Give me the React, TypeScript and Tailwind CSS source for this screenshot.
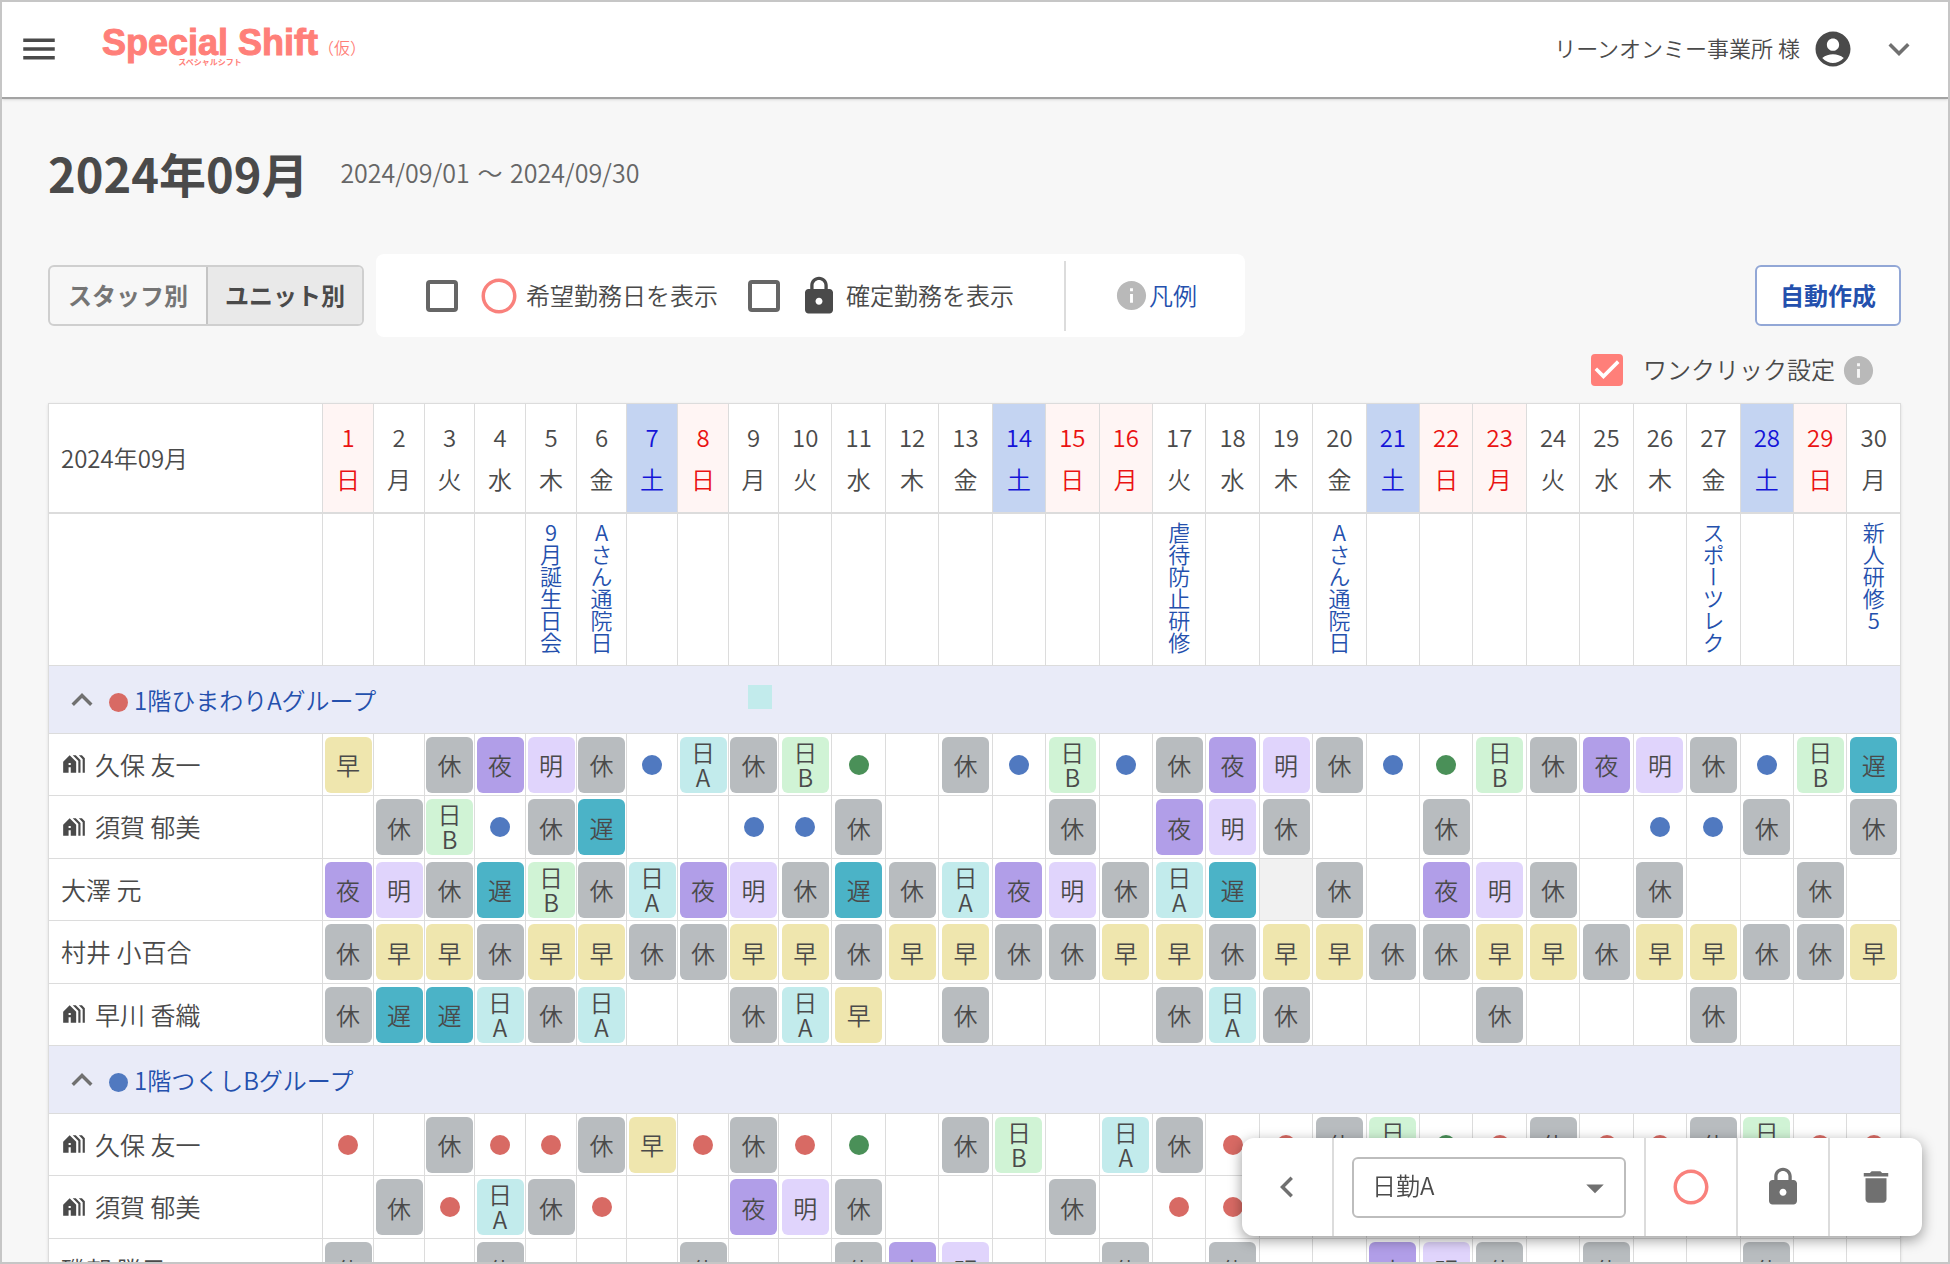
import { useState } from "react";
import {
  MdAccountCircle,
  MdArrowDropDown,
  MdChevronLeft,
  MdDelete,
  MdExpandLess,
  MdExpandMore,
  MdHolidayVillage,
  MdInfo,
  MdLock,
  MdMenu,
  MdRadioButtonUnchecked,
} from "react-icons/md";

interface Staff {
  name: string;
  shared?: boolean;
  // one character per day, "." is an empty day and "_" a closed one
  shifts: string;
}

interface Unit {
  name: string;
  dot: string;
  marker?: boolean;
  staff: Staff[];
}

const WEEKDAYS = ["日", "月", "火", "水", "木", "金", "土"];
const HOLIDAYS = [16, 23];
const DAYS = Array.from({ length: 30 }, (_, i) => i + 1);

const EVENTS: Record<number, string> = {
  5: "9月誕生日会",
  6: "Aさん通院日",
  17: "虐待防止研修",
  20: "Aさん通院日",
  27: "スポーツレク",
  30: "新人研修5",
};

const CHIPS: Record<string, string> = {
  早: "bg-[#efe6ae]",
  休: "bg-[#b8bcbf]",
  夜: "bg-[#b19ee8]",
  明: "bg-[#e0d4fc]",
  遅: "bg-[#4bb3c7]",
  A: "bg-[#c2ebec]",
  B: "bg-[#d0f3d5]",
};

const DOTS: Record<string, string> = {
  r: "bg-[#d86a64]",
  b: "bg-[#5079c0]",
  g: "bg-[#4a9058]",
};

const UNITS: Unit[] = [
  {
    name: "1階ひまわりAグループ",
    dot: "r",
    marker: true,
    staff: [
      { name: "久保 友一", shared: true, shifts: "早.休夜明休bA休Bg.休bBb休夜明休bgB休夜明休bB遅" },
      { name: "須賀 郁美", shared: true, shifts: ".休Bb休遅..bb休...休.夜明休..休...bb休.休" },
      { name: "大澤 元", shifts: "夜明休遅B休A夜明休遅休A夜明休A遅_休.夜明休.休..休." },
      { name: "村井 小百合", shifts: "休早早休早早休休早早休早早休休早早休早早休休早早休早早休休早" },
      { name: "早川 香織", shared: true, shifts: "休遅遅A休A..休A早.休...休A休...休...休..." },
    ],
  },
  {
    name: "1階つくしBグループ",
    dot: "b",
    staff: [
      { name: "久保 友一", shared: true, shifts: "r.休rr休早r休rg.休B.A休rr休Bgr休rr休Brr" },
      { name: "須賀 郁美", shared: true, shifts: ".休rA休r..夜明休...休.rr............" },
      { name: "磯部 勝己", shifts: "休..休...休..休夜明..休.休..夜明休.休..休.." },
    ],
  },
];

function dayStyle(day: number) {
  const weekday = (day - 1) % 7;
  if (weekday === 0 || HOLIDAYS.includes(day)) return "bg-[#fff5f4] text-[#ea1212]";
  if (weekday === 6) return "bg-[#c4d4f2] text-[#1414d8]";
  return "";
}

// one digit days are narrower, the rest share what is left
function dayWidth(day: number) {
  if (day > 9) return "";
  return day % 3 === 0 ? "w-[50px]" : "w-[51px]";
}

function CheckBox({ id, defaultChecked }: { id: string; defaultChecked?: boolean }) {
  return (
    <span className="relative flex h-8 w-8 shrink-0">
      <input
        id={id}
        type="checkbox"
        defaultChecked={defaultChecked}
        className="peer h-8 w-8 appearance-none rounded-[4px] border-4 border-[#666] checked:border-[#ff7f79] checked:bg-[#ff7f79]"
      />
      <svg
        viewBox="3 3 18 18"
        className="pointer-events-none absolute inset-0 hidden h-8 w-8 fill-white peer-checked:block"
      >
        <path d="M10 17l-5-5 1.41-1.41L10 14.17l7.59-7.59L19 8z" />
      </svg>
    </span>
  );
}

function ShiftCell({ code }: { code: string }) {
  if (code in DOTS) {
    return <span className={`mx-auto block h-5 w-5 rounded-full ${DOTS[code]}`} />;
  }
  if (code in CHIPS) {
    const isDay = code === "A" || code === "B";
    return (
      <span
        className={`mx-auto flex h-14 w-[47px] flex-col items-center justify-center rounded-md leading-[25px] ${CHIPS[code]} ${isDay ? "pb-0.5" : ""}`}
      >
        {isDay && <span>日</span>}
        <span>{code}</span>
      </span>
    );
  }
  return null;
}

function UnitRows({ unit }: { unit: Unit }) {
  const [open, setOpen] = useState(true);

  return (
    <tbody>
      <tr className="h-[68px] bg-[#e9ebf8]">
        <th colSpan={31} className="relative border-r border-b border-[#dcdcdc] p-0 font-[350]">
          <div className="flex items-center pl-3">
            <button
              type="button"
              aria-label={unit.name}
              onClick={() => setOpen(!open)}
              className="text-[42px] text-[#707070]"
            >
              {open ? <MdExpandLess /> : <MdExpandMore />}
            </button>
            <span className={`mt-1.5 ml-1.5 h-[19px] w-[19px] rounded-full ${DOTS[unit.dot]}`} />
            <a href="#unit" className="ml-1.5 text-[#2450ad]">
              {unit.name}
            </a>
          </div>
          {unit.marker && <span className="absolute top-[19px] left-[699px] h-6 w-6 bg-[#c2ebec]" />}
        </th>
      </tr>
      {open &&
        unit.staff.map((s) => (
          <tr key={s.name} className="h-[62px] odd:h-[63px]">
            <th className="border-r border-b border-[#dcdcdc] p-0 pl-3 text-left text-[25px] font-[350]">
              <span className="flex items-center gap-2">
                {s.shared && <MdHolidayVillage className="text-[26px]" />}
                {s.name}
              </span>
            </th>
            {DAYS.map((day) => {
              const code = s.shifts[day - 1];
              return (
                <td
                  key={day}
                  className={`border-r border-b border-[#dcdcdc] p-0 ${code === "_" ? "bg-[#f1f1f1]" : ""}`}
                >
                  <ShiftCell code={code} />
                </td>
              );
            })}
          </tr>
        ))}
    </tbody>
  );
}

function ShiftTable() {
  return (
    <table className="w-full table-fixed border-separate border-spacing-0 border-t border-l border-[#dcdcdc] bg-white text-center shadow-sm">
      <colgroup>
        <col className="w-[274px]" />
        {DAYS.map((day) => (
          <col key={day} className={dayWidth(day)} />
        ))}
      </colgroup>
      <thead>
        <tr className="h-[110px]">
          <th className="border-r border-b-2 border-[#dcdcdc] p-0 pl-3 text-left font-[350]">2024年09月</th>
          {DAYS.map((day) => (
            <th
              key={day}
              className={`border-r border-b-2 border-[#dcdcdc] p-0 leading-[42px] font-[350] ${dayStyle(day)}`}
            >
              <div>{day}</div>
              <div>{WEEKDAYS[(day - 1) % 7]}</div>
            </th>
          ))}
        </tr>
        <tr className="h-[152px] align-top text-[22px] leading-[22px] text-[#2450ad]">
          <td className="border-r border-b border-[#dcdcdc] p-0" />
          {DAYS.map((day) => (
            <td key={day} className="border-r border-b border-[#dcdcdc] p-0 pt-2">
              {EVENTS[day] && (
                <div className="flex justify-center">
                  <a href="#event" className="[text-orientation:upright] [writing-mode:vertical-rl]">
                    {EVENTS[day]}
                  </a>
                </div>
              )}
            </td>
          ))}
        </tr>
      </thead>
      {UNITS.map((unit) => (
        <UnitRows key={unit.name} unit={unit} />
      ))}
    </table>
  );
}

function Header() {
  return (
    <header className="flex h-[97px] shrink-0 items-center border-b-2 border-[#a3a3a3] bg-white pr-7 pb-0.5 pl-4 shadow-sm">
      <button type="button" aria-label="メニュー" className="text-[42px]">
        <MdMenu />
      </button>
      <a href="#top" className="mb-1 ml-[42px] flex items-center text-[#ff7f79]">
        <span className="flex flex-col items-center">
          <span className="font-['Liberation_Sans',sans-serif] text-4xl leading-[30px] font-bold [-webkit-text-stroke:1px_#ff7f79] [stroke-linejoin:round]">
            Special Shift
          </span>
          <span className="text-[8px] leading-2 font-bold">スペシャルシフト</span>
        </span>
        <span className="text-base">（仮）</span>
      </a>
      <div className="ml-auto flex items-center">
        <span className="pb-0.5 text-[22px]">リーンオンミー事業所 様</span>
        <MdAccountCircle className="ml-3 text-[42px]" />
        <button type="button" aria-label="アカウント" className="ml-6 text-[42px] text-[#707070]">
          <MdExpandMore />
        </button>
      </div>
    </header>
  );
}

function Toolbar() {
  return (
    <div className="mt-11 flex items-center">
      <div className="flex h-[61px] overflow-hidden rounded-md border-2 border-[#cfcfcf] font-bold">
        <button type="button" className="w-[156px] pb-0.5 text-[#757575]">
          スタッフ別
        </button>
        <button type="button" className="w-[156px] border-l-2 border-[#c4c4c4] bg-[#e9e9e9] pb-0.5">
          ユニット別
        </button>
      </div>
      <div className="ml-3 flex h-[83px] items-center rounded-lg bg-white pr-12 pl-[50px]">
        <CheckBox id="wish" />
        <label htmlFor="wish" className="ml-5 flex items-center gap-1.5">
          <MdRadioButtonUnchecked className="text-[42px] text-[#f9817c]" />
          <span className="pb-0.5">希望勤務日を表示</span>
        </label>
        <span className="ml-[30px] flex">
          <CheckBox id="fixed" />
        </span>
        <label htmlFor="fixed" className="ml-[18px] flex items-center gap-1.5">
          <MdLock className="text-[42px]" />
          <span className="pb-0.5">確定勤務を表示</span>
        </label>
        <a
          href="#legend"
          className="ml-[50px] flex h-[70px] items-center border-l-2 border-[#dcdcdc] pl-12 text-[#2450ad]"
        >
          <MdInfo className="text-[35px] text-[#b9b9b9]" />
          <span className="pb-0.5">凡例</span>
        </a>
      </div>
      <button
        type="button"
        className="ml-auto h-[61px] w-[146px] rounded-md border-2 border-[#92a7d6] bg-white pb-0.5 font-bold text-[#2450ad]"
      >
        自動作成
      </button>
    </div>
  );
}

function ShiftPalette() {
  return (
    <div className="fixed right-7 bottom-7 flex h-[98px] divide-x-2 divide-[#dcdcdc] overflow-hidden rounded-xl bg-white text-[42px] text-[#707070] shadow-[0_4px_14px_rgba(0,0,0,0.4)]">
      <button type="button" aria-label="閉じる" className="flex w-[92px] items-center justify-center">
        <MdChevronLeft />
      </button>
      <div className="flex items-center px-[18px]">
        <div className="relative">
          <select
            aria-label="勤務"
            className="block h-[61px] w-[274px] appearance-none rounded-md border-2 border-[#bdbdbd] bg-white pb-1 pl-[18px] text-2xl text-[#4a4a4a]"
          >
            <option>日勤A</option>
            <option>日勤B</option>
          </select>
          <MdArrowDropDown className="pointer-events-none absolute top-[10px] right-[10px]" />
        </div>
      </div>
      <button type="button" aria-label="希望" className="flex w-[92px] items-center justify-center text-[#f9817c]">
        <MdRadioButtonUnchecked />
      </button>
      <button type="button" aria-label="確定" className="flex w-[92px] items-center justify-center">
        <MdLock />
      </button>
      <button type="button" aria-label="削除" className="flex w-[92px] items-center justify-center">
        <MdDelete />
      </button>
    </div>
  );
}

export default function App() {
  return (
    <div className="flex h-screen flex-col overflow-hidden border-2 border-[#c6c6c6] bg-[#f7f7f7] font-['Noto_Sans_CJK_JP',sans-serif] text-2xl font-[350] text-[#4a4a4a]">
      <Header />
      <main className="pt-9 pr-[47px] pl-[46px]">
        <div className="flex items-center gap-8">
          <h1 className="text-[47px] leading-[75px] font-bold">2024年09月</h1>
          <span className="text-[25px] text-[#666]">
            2024/09/01 <span className="px-0.5">〜</span> 2024/09/30
          </span>
        </div>
        <Toolbar />
        <div className="flex h-[66px] items-center justify-end pr-[25px]">
          <CheckBox id="oneclick" defaultChecked />
          <label htmlFor="oneclick" className="ml-5 pb-0.5">
            ワンクリック設定
          </label>
          <MdInfo className="ml-1.5 text-[35px] text-[#b9b9b9]" />
        </div>
        <ShiftTable />
      </main>
      <ShiftPalette />
    </div>
  );
}
